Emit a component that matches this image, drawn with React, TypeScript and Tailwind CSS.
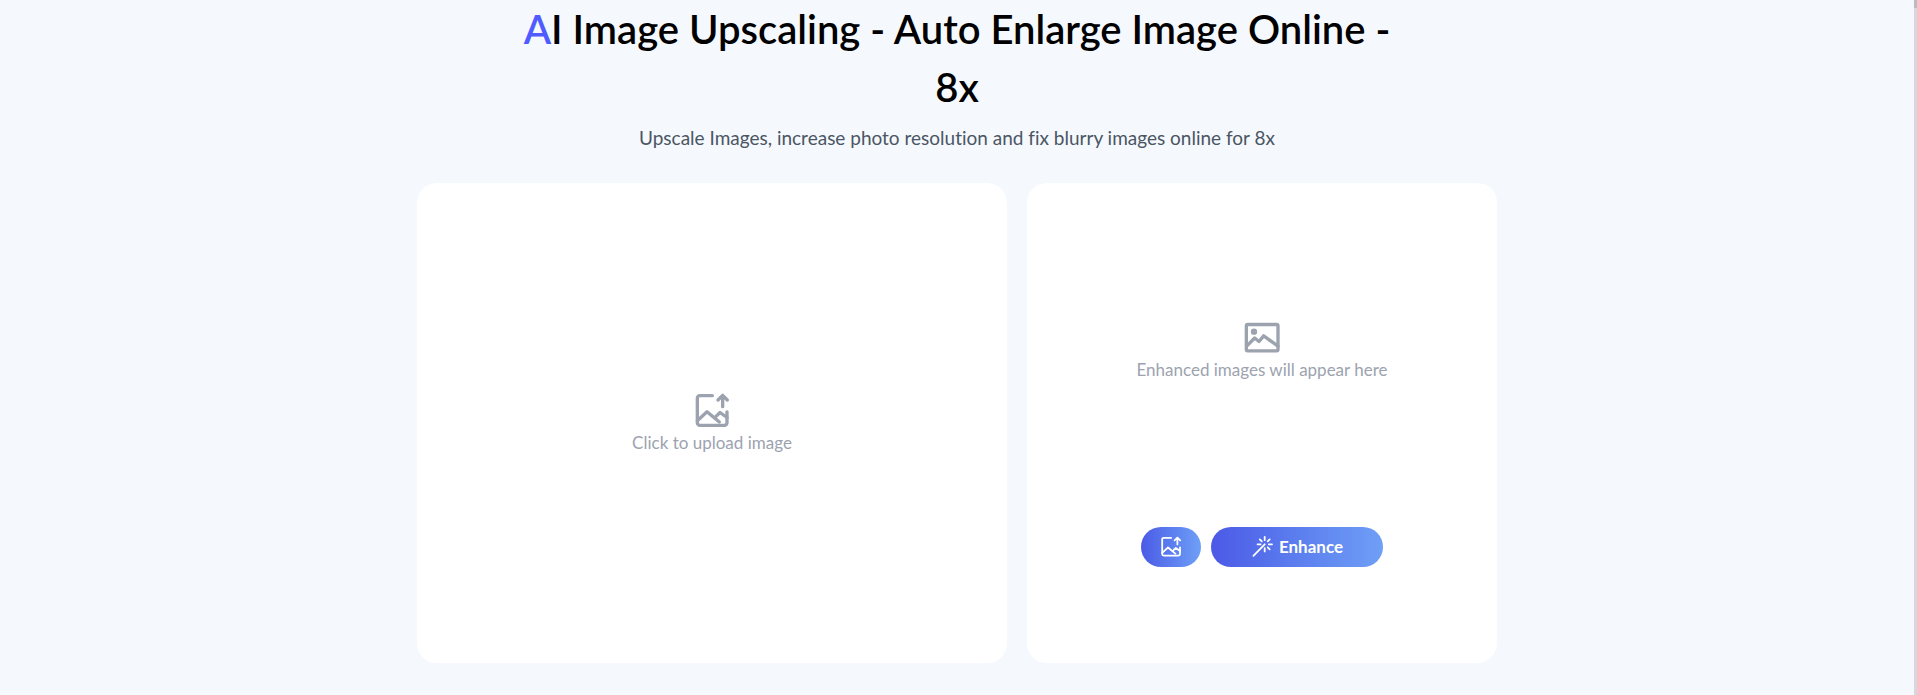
import type { ReactNode } from "react";

type IconProps = {
  className?: string;
  strokeWidth?: number;
};

function Icon({ className = "size-6", strokeWidth = 2, children }: IconProps & { children: ReactNode }) {
  return (
    <svg
      viewBox="0 0 24 24"
      fill="none"
      stroke="currentColor"
      strokeWidth={strokeWidth}
      strokeLinecap="round"
      strokeLinejoin="round"
      aria-hidden="true"
      className={className}
    >
      {children}
    </svg>
  );
}

function UploadIcon(props: IconProps) {
  return (
    <Icon {...props}>
      <path d="M12.2 2.8H4.7a1.5 1.5 0 0 0-1.5 1.5v14.8a1.5 1.5 0 0 0 1.5 1.5h14.8a1.5 1.5 0 0 0 1.5-1.5v-6.6" />
      <path d="m3.2 17.8 5.8-5.3 7.4 6.1" />
      <path d="m13.8 15.8 3-2.9 4.2 3" />
      <path d="M18.4 9.4V2.8M15.6 5.4l2.8-2.8 2.8 2.8" />
    </Icon>
  );
}

function PictureIcon(props: IconProps) {
  return (
    <Icon {...props}>
      <rect x="2.6" y="3.9" width="19" height="15.8" rx="0.8" />
      <circle cx="7.2" cy="8.2" r="0.9" />
      <path d="m2.8 16.9 4.8-4.9 2.6 2.1 2.8-3.4 8.6 6.2" />
    </Icon>
  );
}

function WandIcon(props: IconProps) {
  return (
    <Icon {...props}>
      <path d="M13.7 9.3 2.4 20.8" />
      <path d="M13.7 2v3.2M13.7 13.2v3.2M6.6 9.3h3M17.8 9.3H21" />
      <path d="m8.8 4.4 2 2M18.7 4.4l-2 2M16.7 12.3l2 2" />
    </Icon>
  );
}

export default function App() {
  return (
    <div className="flex min-h-screen bg-[#f5f9fe] font-['Lato',sans-serif] [font-variant-ligatures:none]">
      <main className="min-w-0 flex-1 px-4 pb-8">
        <header className="mx-auto max-w-4xl text-center">
          <h1 className="text-[40px] leading-[58px] font-semibold text-black">
            <span className="text-[#505cff]">A</span>I Image Upscaling - Auto Enlarge Image Online - 8x
          </h1>
          <p className="mt-2 text-[19px] leading-7 text-[#4b5563]">
            Upscale Images, increase photo resolution and fix blurry images online for 8x
          </p>
        </header>

        <div className="mx-auto mt-[31px] grid max-w-[1080px] gap-5 md:grid-cols-[59fr_47fr]">
          <button
            type="button"
            className="flex min-h-[480px] cursor-pointer flex-col items-center justify-center rounded-[20px] bg-white text-[#9ca3af]"
          >
            <UploadIcon className="size-10" />
            <span className="text-[17px] leading-6">Click to upload image</span>
          </button>

          <section className="flex min-h-[480px] flex-col items-center gap-2.5 rounded-[20px] bg-white pb-24">
            <div className="flex flex-1 flex-col items-center justify-center text-[#9ca3af]">
              <PictureIcon className="size-10" />
              <p className="text-[17px] leading-6">Enhanced images will appear here</p>
            </div>
            <div className="flex gap-2.5 text-white">
              <button
                type="button"
                aria-label="Upload image"
                className="flex h-10 w-15 cursor-pointer items-center justify-center rounded-full bg-linear-to-r from-[#4c59e6] to-[#6f9ff6]"
              >
                <UploadIcon strokeWidth={1.8} />
              </button>
              <button
                type="button"
                className="flex h-10 w-43 cursor-pointer items-center justify-center gap-1 rounded-full bg-linear-to-r from-[#4c59e6] to-[#6f9ff6] text-[17px] font-bold"
              >
                <WandIcon strokeWidth={1.8} />
                Enhance
              </button>
            </div>
          </section>
        </div>
      </main>

      {/* slim scroll indicator */}
      <div className="w-[3px] bg-[#d5d9de]">
        <div className="h-2 bg-[#b9bbbe]" />
      </div>
    </div>
  );
}
